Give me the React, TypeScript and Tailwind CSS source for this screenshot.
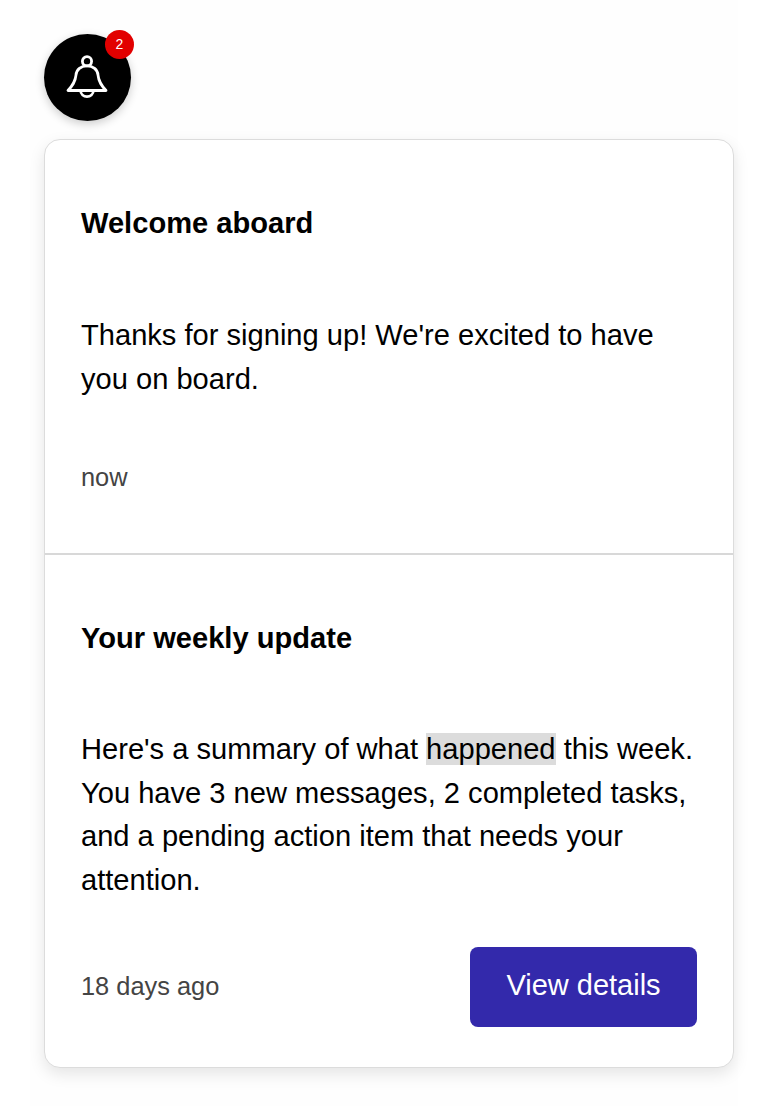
const font = { fontFamily: '"Liberation Sans", Arial, sans-serif' };

function BellIcon() {
  return (
    <svg width="44" height="44" viewBox="0 0 44 44" fill="none" stroke="white" strokeWidth="2.8" strokeLinejoin="round" className="relative left-[-1px] top-[-1px]">
      <circle cx="22" cy="6.2" r="4.6" />
      <path d="M3 35.5H41C37 31 33.6 27 33 20C32.6 14.5 28 10.8 22 10.8C16 10.8 11.4 14.5 11 20C10.4 27 7 31 3 35.5Z" />
      <path d="M15.5 35.5C15.8 39.2 18.6 41.6 22 41.6C25.4 41.6 28.2 39.2 28.5 35.5" />
    </svg>
  );
}

export default function App() {
  return (
    <div className="min-h-[1106px] bg-white" style={font}>
      <div className="mx-[30px] flex h-[1106px] flex-col bg-[#fefefe] px-[14px] pt-[16px]">
        {/* bell button */}
        <div className="relative mt-[18px] h-[87px] w-[87px] shrink-0 rounded-full bg-black shadow-[0_3px_10px_rgba(0,0,0,0.2)]">
          <div className="flex h-full w-full items-center justify-center">
            <BellIcon />
          </div>
          <span className="absolute left-[61px] top-[-4px] flex h-[29px] w-[29px] items-center justify-center rounded-full bg-[#e20000] text-[14px] text-white">
            2
          </span>
        </div>

        {/* notifications card */}
        <div className="mt-[18px] w-[690px] rounded-[16px] border border-[#dcdcdc] bg-white shadow-[0_6px_16px_rgba(0,0,0,0.1)]">
          <div className="h-[415px] border-b-2 border-[#d8d8d8] px-[36px] pt-[63px]">
            <h2 className="text-[29.1px] font-bold leading-[40px] text-black">Welcome aboard</h2>
            <p className="mt-[71px] text-[29.1px] leading-[43.65px] text-black">
              Thanks for signing up! We're excited to have you on board.
            </p>
            <div className="mt-[58px] text-[25.4px] leading-[36px] text-[#444]">now</div>
          </div>
          <div className="px-[36px] pt-[63px]">
            <h2 className="text-[29.1px] font-bold leading-[40px] text-black">Your weekly update</h2>
            <p className="mt-[70px] text-[29.1px] leading-[43.65px] text-black">
              Here's a summary of what <span className="bg-[#dcdcdc]">happened</span> this week. You have 3 new messages, 2 completed tasks, and a pending action item that needs your attention.
            </p>
            <div className="mt-[44px] mb-[40px] flex items-center justify-between">
              <span className="pb-[2px] text-[25.4px] text-[#444]">18 days ago</span>
              <button className="h-[80px] w-[227px] rounded-[8px] bg-[#3329ab] pb-[2px] text-[29px] text-white">
                View details
              </button>
            </div>
          </div>
        </div>
      </div>
    </div>
  );
}
